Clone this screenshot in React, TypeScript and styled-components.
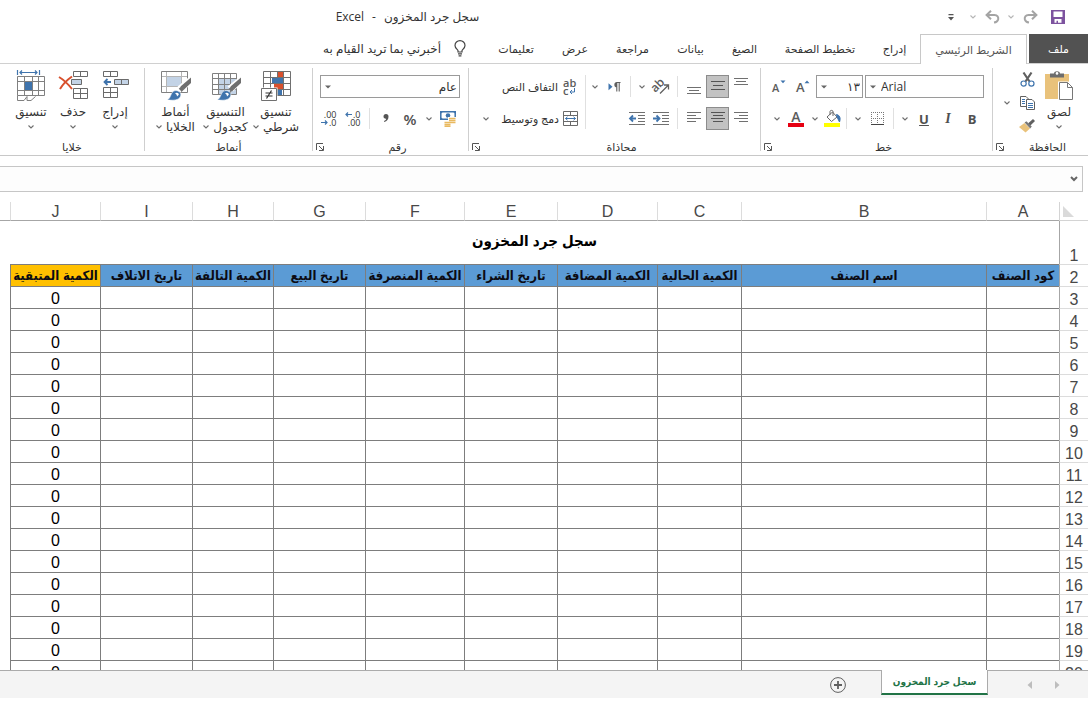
import React from "react";
import styled, { createGlobalStyle, css } from "styled-components";

const UI_FONT = `"Open Sans", "DejaVu Sans", sans-serif`;
const SHEET_FONT = `"Liberation Sans", "DejaVu Sans Condensed", "DejaVu Sans", Arial, sans-serif`;

const GlobalStyle = createGlobalStyle`
  *, *::before, *::after { box-sizing: border-box; }
  body { margin: 0; background: #fff; font-family: ${UI_FONT}; color: #333; }
  button, input, select { font: inherit; color: inherit; margin: 0; }
  button { background: none; border: 0; padding: 0; cursor: pointer; }
  svg { display: block; flex: none; overflow: visible; }
`;

const Page = styled.div`
  display: flex;
  flex-direction: column;
  height: 100vh;
  overflow: hidden;
  font-size: 11px;
`;

/* ---------- title bar ---------- */

const TitleBar = styled.header`
  display: flex;
  align-items: center;
  height: 34px;
  flex: none;
  padding-right: 14px;
`;

const QuickAccess = styled.div`
  display: flex;
  align-items: center;
`;

const DocTitle = styled.h1`
  flex: 1;
  display: flex;
  justify-content: center;
  gap: 8px;
  margin: 0;
  padding-right: 121px;
  font-size: 12px;
  font-weight: 400;
  line-height: 16px;
  white-space: nowrap;
`;

/* ---------- ribbon tabs ---------- */

const TabBar = styled.nav`
  display: flex;
  height: 30px;
  flex: none;
  border-bottom: 1px solid #d0d0d0;
`;

const Tab = styled.button<{ $w: number; $kind?: "file" | "active" }>`
  width: ${(p) => p.$w}px;
  height: 29px;
  white-space: nowrap;
  line-height: 16px;
  ${(p) =>
    p.$kind === "file" &&
    css`
      background: #525252;
      color: #fff;
      margin-left: 2px;
    `}
  ${(p) =>
    p.$kind === "active" &&
    css`
      height: 30px;
      background: #fff;
      border: 1px solid #c8c8c8;
      border-bottom: 0;
      color: #555;
    `}
`;

const TellMe = styled.button`
  display: flex;
  align-items: center;
  gap: 13px;
  margin-right: 18px;
  height: 29px;
  font-size: 12px;
  white-space: nowrap;
`;

/* ---------- ribbon ---------- */

const Ribbon = styled.div`
  display: flex;
  flex: none;
  height: 92px;
  padding: 4px 0;
  border-bottom: 1px solid #c8c8c8;
`;

const Group = styled.section<{ $w?: number }>`
  display: flex;
  flex-direction: column;
  ${(p) => (p.$w ? `width: ${p.$w}px; flex: none; border-left: 1px solid #cfcfcf;` : "flex: 1;")}
`;

const GroupBody = styled.div<{ $pad: number }>`
  display: flex;
  flex: 1;
  padding-right: ${(p) => p.$pad}px;
`;

const GroupFoot = styled.div`
  display: flex;
  align-items: center;
  height: 8px;
`;

const GroupName = styled.span`
  flex: 1;
  text-align: center;
  line-height: 16px;
`;

const Launcher = styled.button`
  display: flex;
  align-items: center;
  justify-content: center;
  width: 14px;
  height: 16px;
`;

const Stack = styled.div`
  display: flex;
  flex-direction: column;
  gap: 9px;
  padding-top: 7px;
`;

const Row = styled.div<{ $gap?: number }>`
  display: flex;
  align-items: center;
  height: 23px;
  gap: ${(p) => p.$gap ?? 0}px;
`;

const IconButton = styled.button<{ $w?: number; $on?: boolean }>`
  display: flex;
  align-items: center;
  justify-content: center;
  width: ${(p) => p.$w ?? 24}px;
  height: 23px;
  flex: none;
  ${(p) => p.$on && "background: #c2c2c2; border: 1px solid #8c8c8c;"}
`;

const Glyph = styled.span<{ $style?: string; $weight?: number; $size?: number }>`
  font-size: ${(p) => p.$size ?? 13}px;
  line-height: 16px;
  font-weight: ${(p) => p.$weight ?? 700};
  font-style: ${(p) => (p.$style === "italic" ? "italic" : "normal")};
  text-decoration: ${(p) => (p.$style === "underline" ? "underline" : "none")};
  color: #505050;
`;

const ItalicGlyph = styled(Glyph)`
  font-family: "Liberation Serif", serif;
`;

const Divider = styled.span<{ $tall?: boolean }>`
  width: 1px;
  height: ${(p) => (p.$tall ? 54 : 21)}px;
  margin: ${(p) => (p.$tall ? "7px 2px 0" : "0 4px")};
  background: #e0e0e0;
  flex: none;
`;

const TextButton = styled.button`
  display: flex;
  align-items: center;
  gap: 4px;
  height: 23px;
  padding-right: 5px;
  white-space: nowrap;
`;

const SelectBox = styled.span<{ $w: number }>`
  display: grid;
  width: ${(p) => p.$w}px;
  height: 23px;
  border: 1px solid #9a9a9a;
  align-items: center;
  > * { grid-area: 1 / 1; }
  > svg { justify-self: end; margin-left: 4px; pointer-events: none; }
`;

const Select = styled.select<{ $ltr?: boolean }>`
  appearance: none;
  width: 100%;
  height: 21px;
  border: 0;
  background: transparent;
  font-size: 12px;
  direction: ${(p) => (p.$ltr ? "ltr" : "rtl")};
  padding: ${(p) => (p.$ltr ? "0 2px 0 15px" : "0 2px 0 12px")};
`;

const BigButton = styled.button<{ $w: number }>`
  display: flex;
  flex-direction: column;
  align-items: center;
  width: ${(p) => p.$w}px;
  padding-top: 2px;
  font-size: 12px;
  line-height: 14px;
  white-space: nowrap;
  > svg:first-child { margin-bottom: 3px; }
`;

const BigLine = styled.span`
  display: flex;
  align-items: center;
  justify-content: center;
  gap: 4px;
  height: 15px;
`;

const ClipTools = styled.div`
  display: flex;
  flex-direction: column;
`;

const ClipDrop = styled.div`
  display: flex;
  align-items: center;
  height: 69px;
`;

/* ---------- formula bar ---------- */

const FormulaBar = styled.div`
  display: flex;
  flex: none;
  height: 26px;
  margin: 10px 5px 0 0;
  border: 1px solid #c6c6c6;
  border-left: 0;
  background: #fdfdfd;
`;

const FormulaInput = styled.input`
  flex: 1;
  min-width: 0;
  border: 0;
  background: transparent;
  outline: none;
`;

/* ---------- sheet ---------- */

const SheetArea = styled.main`
  flex: 1;
  min-height: 0;
  overflow: hidden;
  padding-top: 10px;
`;

const Sheet = styled.table`
  width: 100%;
  table-layout: fixed;
  border-collapse: separate;
  border-spacing: 0;
  font-family: ${SHEET_FONT};
  font-size: 16px;
  line-height: 18px;
`;

const Corner = styled.th`
  height: 19px;
  padding: 0 4px 3px 0;
  border-left: 1px solid #d4d4d4;
  border-bottom: 1px solid #d4d4d4;
  vertical-align: bottom;
  > svg { margin-right: auto; margin-left: 3px; }
`;

const ColHead = styled.th<{ $edge?: boolean }>`
  height: 19px;
  padding: 0;
  font-weight: 400;
  line-height: 16px;
  vertical-align: bottom;
  color: #484848;
  border-bottom: 1px solid #a6a6a6;
  border-left: ${(p) => (p.$edge ? "0" : "1px solid #dcdcdc")};
`;

const RowHead = styled.th`
  height: 22px;
  padding: 0;
  font-weight: 400;
  line-height: 16px;
  color: #484848;
  vertical-align: bottom;
  border-left: 1px solid #a6a6a6;
  border-bottom: 1px solid #dcdcdc;
`;

const TitleCell = styled.td`
  height: 44px;
  padding: 0 0 4px;
  text-align: center;
  font-weight: 700;
  font-size: 15px;
  color: #000;
  border-bottom: 1px solid #7d7d7d;
`;

const FieldHead = styled.th<{ $gold?: boolean }>`
  height: 22px;
  padding: 0;
  font-size: 13px;
  line-height: 20px;
  font-weight: 700;
  color: #0c0c14;
  white-space: nowrap;
  background: ${(p) => (p.$gold ? "#ffc000" : "#5b9bd5")};
  border-left: 1px solid #7d7d7d;
  border-bottom: 1px solid #7d7d7d;
`;

const Cell = styled.td`
  height: 22px;
  padding: 2px 0 0;
  text-align: center;
  color: #000;
  border-left: 1px solid #7d7d7d;
  border-bottom: 1px solid #7d7d7d;
`;

const Blank = styled.td`
  padding: 0;
`;

/* ---------- sheet tabs ---------- */

const SheetTabs = styled.footer`
  display: flex;
  flex: none;
  height: 28px;
  margin-bottom: 4px;
  background: #f4f4f4;
  border-top: 1px solid #ababab;
`;

const NavButtons = styled.div`
  display: flex;
  align-items: center;
  width: 100px;
  padding-right: 17px;
`;

const SheetTab = styled.button`
  width: 107px;
  height: 25px;
  margin-top: -1px;
  background: #fff;
  border: solid #ababab;
  border-width: 0 1px;
  border-bottom: 2px solid #217346;
  font-family: ${SHEET_FONT};
  font-size: 10px;
  font-weight: 700;
  color: #217346;
  white-space: nowrap;
`;

const AddSheet = styled.button`
  display: flex;
  align-items: center;
  margin-right: 35px;
`;

/* ---------- icons ---------- */

const G = "#6a6a6a";
const BLUE = "#3f74ad";

const Chevron = ({ light }: { light?: boolean }) => (
  <svg width="6" height="4" viewBox="0 0 6 4" fill="none" stroke={light ? "#b5b5b5" : "#6e6e6e"} strokeWidth="1.1">
    <path d="M0.5 0.5 3 3 5.5 0.5" />
  </svg>
);

const Caret = () => (
  <svg width="6" height="4" viewBox="0 0 6 4" fill="#666"><path d="M0 0.5H6L3 3.5Z" /></svg>
);

const SaveIcon = () => (
  <svg width="14" height="14" viewBox="0 0 14 14">
    <path d="M0 0H14V14H0Z" fill="#7d539f" />
    <path d="M2.5 1.5H11.5V7H2.5ZM3.5 9H10.5V12.8H7V10.8H5.5V12.8H3.5Z" fill="#fff" />
  </svg>
);

const UndoIcon = ({ flip }: { flip?: boolean }) => (
  <svg width="15" height="14" viewBox="0 0 15 14" fill="none" stroke="#a4a4a4" strokeWidth="2">
    <g transform={flip ? "translate(15 0) scale(-1 1)" : undefined}>
      <path d="M6 0.8 1.6 5 6 9.2M2 5H9.5C12.5 5 13.6 7 13.2 9.2 12.8 11 11 12.3 9 12.6" />
    </g>
  </svg>
);

const CustomizeIcon = () => (
  <svg width="6" height="7" viewBox="0 0 6 7" fill="#555"><path d="M0.5 0H5.5V1.2H0.5ZM0 3H6L3 6.5Z" /></svg>
);

const BulbIcon = () => (
  <svg width="12" height="17" viewBox="0 0 12 17" fill="none" stroke="#444" strokeWidth="1.2">
    <path d="M4 12V10.6C3.6 9.2 1 8.2 1 5.4A5 4.8 0 0 1 11 5.4C11 8.2 8.4 9.2 8 10.6V12ZM4 13.8H8M4.6 15.8H7.4" />
  </svg>
);

const PasteIcon = () => (
  <svg width="30" height="31" viewBox="0 0 30 31">
    <path d="M1 4H25V29H1Z" fill="#e9c27b" />
    <path d="M6 7.5V3.5H10C10 0.5 16 0.5 16 3.5H20V7.5Z" fill="#6d6d6d" />
    <circle cx="13" cy="3.4" r="1.3" fill="#fff" />
    <path d="M14 11.5H24.5L30 17V31H14Z" fill="#fff" />
    <path d="M15.5 12.5H23.5L28.5 17.5V29.5H15.5Z" fill="#fff" stroke="#777" />
    <path d="M23.5 12.5V17.5H28.5" fill="none" stroke="#777" />
  </svg>
);

const CutIcon = () => (
  <svg width="15" height="15" viewBox="0 0 15 15" fill="none">
    <path d="M3.5 0.5 9.5 9.5M11.5 0.5 5.5 9.5" stroke="#606060" strokeWidth="2.2" />
    <circle cx="3.6" cy="11.6" r="2.6" stroke={BLUE} strokeWidth="1.2" />
    <circle cx="11.4" cy="11.6" r="2.6" stroke={BLUE} strokeWidth="1.2" />
  </svg>
);

const CopyIcon = () => (
  <svg width="15" height="14" viewBox="0 0 15 14" fill="#fff" stroke="#606060">
    <path d="M0.5 0.5H6L8.5 3V10.5H0.5Z" />
    <path d="M2 3.5H5M2 5.5H5M2 7.5H5" stroke={BLUE} />
    <path d="M6.5 3.5H12L14.5 6V13.5H6.5Z" />
    <path d="M8 7.5H13M8 9.5H13M8 11.5H13" stroke={BLUE} />
  </svg>
);

const BrushIcon = () => (
  <svg width="16" height="14" viewBox="0 0 16 14">
    <path d="M0 8 5.5 4 11 9.5 6.5 13.5Z" fill="#e9c27b" />
    <path d="M5.6 3.6 7.4 2.2 12.8 7.6 11.2 9.4Z" fill="#777" />
    <path d="M9.2 4.2 14 0 16 2 11.4 6.4Z" fill="#606060" />
  </svg>
);

const LauncherIcon = () => (
  <svg width="8" height="8" viewBox="0 0 8 8" fill="none" stroke="#555">
    <path d="M0.5 7V0.5H7M3 3 7 7M7.5 3V7.5H3" />
  </svg>
);

const IconLetter = styled.text<{ $size: number }>`
  font-family: ${UI_FONT};
  font-size: ${(p) => p.$size}px;
  font-weight: 600;
  fill: #5c5c5c;
  direction: ltr;
`;

const GrowFont = ({ down }: { down?: boolean }) => (
  <svg width="14" height="16" viewBox="0 0 14 16">
    <IconLetter $size={down ? 11 : 13} x="0" y="13">A</IconLetter>
    <path d={down ? "M8.5 1.5H13.5L11 4.2Z" : "M8.5 4.2H13.5L11 1.5Z"} fill={BLUE} />
  </svg>
);

const BordersIcon = () => (
  <svg width="13" height="13" viewBox="0 0 13 13" fill="none" stroke="#777" strokeDasharray="1 1">
    <path d="M0 0.5H13M0 6.5H13M0.5 0V13M6.5 0V13M12.5 0V13" />
    <path d="M0 12.5H13" stroke="#444" strokeDasharray="none" />
  </svg>
);

const FillIcon = () => (
  <svg width="17" height="17" viewBox="0 0 17 17">
    <path d="M0 13H16V17H0Z" fill="#ffff00" />
    <path d="M3 7 8.5 2 13 7 7.5 11.5Z" fill="#fff" stroke="#666" />
    <path d="M6 5V1.5C6 0 9 0 9 1.5V6" fill="none" stroke="#666" />
    <path d="M12.5 4.5C15.5 5 17 8 15.5 12L13.5 8Z" fill={BLUE} stroke={BLUE} />
  </svg>
);

const FontColorIcon = () => (
  <svg width="16" height="16" viewBox="0 0 16 16">
    <IconLetter $size={14} x="8" y="11" textAnchor="middle">A</IconLetter>
    <path d="M0 12H16V16H0Z" fill="#e60012" />
  </svg>
);

const LINES: Record<string, [number, number, number][]> = {
  top: [[0, 14, 0], [2, 12, 3], [0, 14, 6]],
  mid: [[0, 14, 0], [2, 12, 4], [0, 14, 8]],
  bottom: [[0, 14, 0], [2, 12, 3], [0, 14, 6]],
  right: [[0, 14, 0], [5, 14, 3], [0, 14, 6], [5, 14, 9]],
  center: [[0, 14, 0], [2, 12, 3], [0, 14, 6], [2, 12, 9]],
  left: [[0, 14, 0], [0, 9, 3], [0, 14, 6], [0, 9, 9]],
};
const OFFSET: Record<string, number> = { top: 1, mid: 4, bottom: 10, right: 3, center: 3, left: 3 };

const LinesIcon = ({ kind }: { kind: string }) => (
  <svg width="14" height="19" viewBox="0 0 14 19" stroke={kind === "center" || kind === "mid" ? "#555" : "#707070"}>
    {LINES[kind].map(([a, b, y]) => (
      <path key={y} d={`M${a} ${y + OFFSET[kind] + 0.5}H${b}`} />
    ))}
  </svg>
);

const OrientIcon = () => (
  <svg width="18" height="17" viewBox="0 0 18 17" fill="none" stroke="#606060" strokeWidth="1.3">
    <g transform="rotate(-45 6 8)">
      <IconLetter $size={12} x="-1" y="11" stroke="none">ab</IconLetter>
    </g>
    <path d="M8 15.5 16 7.5M12 7H16.5V11.5" />
  </svg>
);

const DirectionIcon = () => (
  <svg width="13" height="10" viewBox="0 0 13 10">
    <path d="M0.5 1.2V8.2L4.5 4.7Z" fill={BLUE} />
    <path d="M9 0.5H12.5M8.8 0.5V9.5M11.2 0.5V9.5" fill="none" stroke="#606060" strokeWidth="1.1" />
    <path d="M9 0A2.6 2.6 0 0 0 9 5.3Z" fill="#606060" />
  </svg>
);

const IndentIcon = ({ left }: { left?: boolean }) => (
  <svg width="16" height="14" viewBox="0 0 16 14" fill="none" stroke="#707070">
    <path d="M0 0.5H16M9 3.5H16M9 6.5H16M9 9.5H16M0 12.5H16" />
    <path d={left ? "M1 6.5H7M4 3.5 1 6.5 4 9.5" : "M0 6.5H6M3.5 3.5 6.5 6.5 3.5 9.5"} stroke={BLUE} strokeWidth="1.8" />
  </svg>
);

const WrapIcon = () => (
  <svg width="16" height="18" viewBox="0 0 16 18">
    <IconLetter $size={11} x="1" y="9">ab</IconLetter>
    <IconLetter $size={11} x="1" y="17">c</IconLetter>
    <path d="M12.5 10V14H8M10 12 8 14 10 16" fill="none" stroke={BLUE} />
  </svg>
);

const MergeIcon = () => (
  <svg width="15" height="15" viewBox="0 0 15 15" fill="none" stroke={G}>
    <path d="M0.5 0.5H14.5V14.5H0.5ZM0.5 4.5H14.5M0.5 10.5H14.5M7.5 0.5V4.5M7.5 10.5V14.5" />
    <path d="M2.5 7.5H12.5M4.5 5.8 2.5 7.5 4.5 9.2M10.5 5.8 12.5 7.5 10.5 9.2" stroke={BLUE} />
  </svg>
);

const CurrencyIcon = () => (
  <svg width="16" height="16" viewBox="0 0 16 16">
    <path d="M0.8 0.8H15.2V8.2H0.8Z" fill="#fff" stroke={BLUE} strokeWidth="1.5" />
    <path d="M0 3.2V0H4ZM16 3.2V0H12ZM0 5.8V9H4Z" fill={BLUE} />
    <circle cx="8" cy="4.5" r="2.3" fill={BLUE} />
    <path d="M8 6H16V13H12V16H4V10H8Z" fill="#fff" />
    <path d="M9 7.5H15.5M9 9.5H15.5M9 11.5H15.5M4.5 11.5H10.5M4.5 13.5H10.5M4.5 15.3H10.5" stroke="#e9b95f" strokeWidth="1.4" />
  </svg>
);

const Decimals = styled.span`
  display: flex;
  flex-direction: column;
  align-items: stretch;
  width: 15px;
  direction: ltr;
  font-size: 9px;
  line-height: 8px;
  color: #333;
  > span { display: flex; justify-content: flex-end; align-items: center; gap: 1px; }
`;

const DecArrow = ({ left }: { left?: boolean }) => (
  <svg width="7" height="5" viewBox="0 0 7 5" fill="none" stroke={BLUE} strokeWidth="1.2">
    <path d={left ? "M7 2.5H1M3 0.5 1 2.5 3 4.5" : "M0 2.5H6M4 0.5 6 2.5 4 4.5"} />
  </svg>
);

const ConditionalIcon = () => (
  <svg width="30" height="31" viewBox="0 0 30 31">
    <g fill="#fff" stroke="#707070">
      <path d="M2.5 1.5H29.5V25.5H2.5ZM2.5 7.5H29.5M2.5 13.5H29.5M2.5 19.5H29.5M9.5 1.5V25.5M16.5 1.5V25.5M22.5 1.5V25.5" />
    </g>
    <path d="M17 2H22V7H17ZM13 14H22V19H13Z" fill="#d8502d" />
    <path d="M11 8H22V13H11ZM17 20H21V25H17Z" fill={BLUE} />
    <path d="M0 17.5H16.5V31H0Z" fill="#fff" />
    <path d="M0.5 18.5H15.5V30.5H0.5Z" fill="#fff" stroke="#707070" />
    <path d="M4.5 23H11.5M4.5 26H11.5M10.5 20.5 5.5 28.5" stroke="#333" strokeWidth="1.2" fill="none" />
  </svg>
);

const BrushOver = () => (
  <>
    <path d="M29.5 6 30 7V14L22 21.5 16.5 16.5Z" fill="#fff" />
    <path d="M30 7.5V13L23 19.5 19.5 16.5Z" fill="#6f6f6f" />
    <path d="M19 17.5 22 20.5" stroke="#707070" strokeWidth="3.5" />
    <path d="M6 29.8C10.5 28.5 9 22 14 20.6 18.5 20 21.5 24 19 27.4 16 31 10 30.4 6 29.8Z" fill={BLUE} stroke="#fff" strokeWidth="0.6" />
    <path d="M14 23.5C15.5 22 18 22.8 17.8 24.8L16 26.5C16 25 15.5 24 14 23.5Z" fill="#fff" />
  </>
);

const TableStyleIcon = () => (
  <svg width="30" height="31" viewBox="0 0 30 31">
    <path d="M1.5 3.5H25.5V24.5H1.5Z" fill="#fff" />
    <path d="M8 9H25V24H8Z" fill="#c3d3e6" />
    <path d="M1.5 3.5H25.5V24.5H1.5ZM1.5 8.5H25.5M1.5 14.5H25.5M1.5 19.5H25.5M7.5 3.5V24.5M13.5 3.5V24.5M19.5 3.5V24.5" fill="none" stroke="#808080" />
    <BrushOver />
  </svg>
);

const CellStyleIcon = () => (
  <svg width="30" height="31" viewBox="0 0 30 31">
    <path d="M0.5 1.5H26.5V22.5H0.5Z" fill="#fff" stroke="#808080" />
    <path d="M1 6.5H26M1 16.5H26M5.5 2V22M20.5 2V22" fill="none" stroke="#b5b5b5" />
    <path d="M6 7H20V16H6Z" fill="#c3d3e6" />
    <BrushOver />
  </svg>
);

const InsertCells = () => (
  <svg width="27" height="31" viewBox="0 0 27 31" fill="#fff" stroke={G}>
    <path d="M1.5 1.5H15.5V6.5H1.5ZM8.5 1.5V6.5M1.5 17.5H15.5V27.5H1.5ZM1.5 22.5H15.5M8.5 17.5V27.5" />
    <path d="M12.5 9.5H26.5V14.5H12.5ZM19.5 9.5V14.5" fill="#c3d3e6" />
    <path d="M9 12H2.5M5.5 9 2.5 12 5.5 15" fill="none" stroke={BLUE} strokeWidth="1.8" />
  </svg>
);

const DeleteCells = () => (
  <svg width="30" height="31" viewBox="0 0 30 31" fill="#fff" stroke={G}>
    <path d="M15.5 1.5H29.5V6.5H15.5ZM22.5 1.5V6.5M15.5 18.5H29.5V28.5H15.5ZM15.5 23.5H29.5M22.5 18.5V28.5" />
    <path d="M13.5 9.5H23.5V14.5H13.5Z" fill="#c3d3e6" />
    <path d="M1 7C6 10 10 14 14 19M14 6.5C9 10 5 14 2 19" fill="none" stroke="#d8502d" strokeWidth="2" />
  </svg>
);

const FormatCells = () => (
  <svg width="28" height="31" viewBox="0 0 28 31" fill="none" stroke="#808080">
    <path d="M0.5 6.5H27.5V25.5H0.5ZM0.5 11.5H27.5M0.5 20.5H27.5M7.5 6.5V25.5M15.5 6.5V25.5M21.5 6.5V25.5" fill="#fff" />
    <path d="M8 12H15V20H8Z" fill={BLUE} stroke="none" />
    <path d="M0.5 25.5V30.5H7L10 26.5M10 26.5V30.5H14L18.5 26.5" />
    <path d="M0.5 0V5M22.5 0V5M3 2.5H20M5 0.5 3 2.5 5 4.5M18 0.5 20 2.5 18 4.5" stroke={BLUE} strokeWidth="1.2" />
  </svg>
);

const CornerIcon = () => (
  <svg width="11" height="11" viewBox="0 0 11 11"><path d="M0 0V11H11Z" fill="#dadada" /></svg>
);

const Arrow = ({ left }: { left?: boolean }) => (
  <svg width="5" height="8" viewBox="0 0 5 8" fill="#bdbdbd"><path d={left ? "M5 0V8L0.5 4Z" : "M0 0V8L4.5 4Z"} /></svg>
);

const PlusCircle = () => (
  <svg width="16" height="16" viewBox="0 0 16 16" fill="none" stroke="#606060">
    <circle cx="8" cy="8" r="7.4" />
    <path d="M8 4V12M4 8H12" strokeWidth="1.8" />
  </svg>
);

/* ---------- data ---------- */

const TABS: [string, number][] = [
  ["إدراج", 51],
  ["تخطيط الصفحة", 98],
  ["الصيغ", 53],
  ["بيانات", 55],
  ["مراجعة", 61],
  ["عرض", 54],
  ["تعليمات", 64],
];

const COLUMNS: { id: string; name: string; width?: number }[] = [
  { id: "A", name: "كود الصنف", width: 73 },
  { id: "B", name: "اسم الصنف" },
  { id: "C", name: "الكمية الحالية", width: 84 },
  { id: "D", name: "الكمية المضافة", width: 100 },
  { id: "E", name: "تاريخ الشراء", width: 93 },
  { id: "F", name: "الكمية المنصرفة", width: 99 },
  { id: "G", name: "تاريخ البيع", width: 92 },
  { id: "H", name: "الكمية التالفة", width: 81 },
  { id: "I", name: "تاريخ الاتلاف", width: 92 },
  { id: "J", name: "الكمية المتبقية", width: 90 },
];

const ROWS = Array.from({ length: 18 }, (_, i) => i + 3);

const Drop = ({ label, light, w = 14 }: { label: string; light?: boolean; w?: number }) => (
  <IconButton $w={w} aria-label={label}>
    <Chevron light={light} />
  </IconButton>
);

const Foot = ({ name, launcher = true }: { name: string; launcher?: boolean }) => (
  <GroupFoot>
    <GroupName>{name}</GroupName>
    {launcher && (
      <Launcher aria-label={name}>
        <LauncherIcon />
      </Launcher>
    )}
  </GroupFoot>
);

export default function App() {
  return (
    <Page dir="rtl" lang="ar">
      <GlobalStyle />
      <TitleBar>
        <QuickAccess>
          <IconButton $w={32} aria-label="حفظ"><SaveIcon /></IconButton>
          <IconButton aria-label="إعادة"><UndoIcon flip /></IconButton>
          <Drop label="خيارات الإعادة" light />
          <IconButton aria-label="تراجع"><UndoIcon /></IconButton>
          <Drop label="خيارات التراجع" light />
          <IconButton $w={30} aria-label="تخصيص"><CustomizeIcon /></IconButton>
        </QuickAccess>
        <DocTitle>
          <span>سجل جرد المخزون</span>
          <span>-</span>
          <span>Excel</span>
        </DocTitle>
      </TitleBar>

      <TabBar>
        <Tab $w={59} $kind="file">ملف</Tab>
        <Tab $w={107} $kind="active">الشريط الرئيسي</Tab>
        {TABS.map(([name, w]) => (
          <Tab key={name} $w={w}>{name}</Tab>
        ))}
        <TellMe>
          <BulbIcon />
          أخبرني بما تريد القيام به
        </TellMe>
      </TabBar>

      <Ribbon>
        <Group $w={96}>
          <GroupBody $pad={12}>
            <BigButton $w={34}>
              <PasteIcon />
              <BigLine>لصق</BigLine>
              <BigLine><Chevron /></BigLine>
            </BigButton>
            <ClipTools>
              <IconButton $w={30} aria-label="قص"><CutIcon /></IconButton>
              <IconButton $w={30} aria-label="نسخ"><CopyIcon /></IconButton>
              <IconButton $w={30} aria-label="نسخ التنسيق"><BrushIcon /></IconButton>
            </ClipTools>
            <ClipDrop>
              <Drop label="خيارات النسخ" w={10} />
            </ClipDrop>
          </GroupBody>
          <Foot name="الحافظة" />
        </Group>

        <Group $w={232}>
          <GroupBody $pad={8}>
            <Stack>
              <Row $gap={2}>
                <SelectBox $w={119}>
                  <Select $ltr aria-label="الخط" defaultValue="Arial"><option>Arial</option></Select>
                  <Caret />
                </SelectBox>
                <SelectBox $w={47}>
                  <Select aria-label="حجم الخط" defaultValue="١٣"><option>١٣</option></Select>
                  <Caret />
                </SelectBox>
                <IconButton $w={22} aria-label="تكبير الخط"><GrowFont /></IconButton>
                <IconButton $w={22} aria-label="تصغير الخط"><GrowFont down /></IconButton>
              </Row>
              <Row>
                <IconButton aria-label="غامق"><Glyph>B</Glyph></IconButton>
                <IconButton aria-label="مائل"><ItalicGlyph $style="italic" $size={14}>I</ItalicGlyph></IconButton>
                <IconButton aria-label="تسطير"><Glyph $style="underline">U</Glyph></IconButton>
                <Drop label="خيارات التسطير" />
                <Divider />
                <IconButton aria-label="حدود"><BordersIcon /></IconButton>
                <Drop label="خيارات الحدود" />
                <Divider />
                <IconButton $w={20} aria-label="لون التعبئة"><FillIcon /></IconButton>
                <Drop label="خيارات التعبئة" />
                <IconButton aria-label="لون الخط"><FontColorIcon /></IconButton>
                <Drop label="خيارات لون الخط" />
              </Row>
            </Stack>
          </GroupBody>
          <Foot name="خط" />
        </Group>

        <Group $w={292}>
          <GroupBody $pad={7}>
            <Stack>
              <Row>
                <IconButton aria-label="محاذاة للأعلى"><LinesIcon kind="top" /></IconButton>
                <IconButton $w={23} $on aria-label="محاذاة للوسط"><LinesIcon kind="mid" /></IconButton>
                <IconButton aria-label="محاذاة للأسفل"><LinesIcon kind="bottom" /></IconButton>
                <Divider />
                <IconButton aria-label="اتجاه النص"><OrientIcon /></IconButton>
                <Drop label="خيارات الاتجاه" />
                <Divider />
                <IconButton aria-label="اتجاه الفقرة"><DirectionIcon /></IconButton>
                <Drop label="خيارات الفقرة" />
              </Row>
              <Row>
                <IconButton aria-label="محاذاة لليمين"><LinesIcon kind="right" /></IconButton>
                <IconButton $w={23} $on aria-label="توسيط"><LinesIcon kind="center" /></IconButton>
                <IconButton aria-label="محاذاة لليسار"><LinesIcon kind="left" /></IconButton>
                <Divider />
                <IconButton aria-label="إنقاص المسافة"><IndentIcon /></IconButton>
                <IconButton aria-label="زيادة المسافة"><IndentIcon left /></IconButton>
              </Row>
            </Stack>
            <Divider $tall />
            <Stack>
              <TextButton><WrapIcon />التفاف النص</TextButton>
              <Row>
                <TextButton><MergeIcon />دمج وتوسيط</TextButton>
                <Drop label="خيارات الدمج" w={30} />
              </Row>
            </Stack>
          </GroupBody>
          <Foot name="محاذاة" />
        </Group>

        <Group $w={156}>
          <GroupBody $pad={8}>
            <Stack>
              <SelectBox $w={140}>
                <Select aria-label="تنسيق الأرقام" defaultValue="عام"><option>عام</option></Select>
                <Caret />
              </SelectBox>
              <Row>
                <IconButton aria-label="تنسيق العملة"><CurrencyIcon /></IconButton>
                <Drop label="خيارات العملة" />
                <IconButton aria-label="نسبة مئوية"><Glyph $weight={600} $size={15}>%</Glyph></IconButton>
                <IconButton aria-label="نمط الفاصلة">
                  <svg width="6" height="9" viewBox="0 0 6 9" fill="#555">
                    <path d="M0.5 2.6A2.4 2.4 0 0 1 5.5 2.6C5.6 5.4 4 7.4 1.2 8L1 7C2.6 6.4 3.2 5.6 3.2 4.8 1.6 5 0.5 4 0.5 2.6Z" />
                  </svg>
                </IconButton>
                <Divider />
                <IconButton aria-label="زيادة المنازل العشرية">
                  <Decimals>
                    <span><DecArrow left />.0</span>
                    <span>.00</span>
                  </Decimals>
                </IconButton>
                <IconButton aria-label="إنقاص المنازل العشرية">
                  <Decimals>
                    <span>.00</span>
                    <span><DecArrow />.0</span>
                  </Decimals>
                </IconButton>
              </Row>
            </Stack>
          </GroupBody>
          <Foot name="رقم" />
        </Group>

        <Group $w={168}>
          <GroupBody $pad={11}>
            <BigButton $w={50}>
              <ConditionalIcon />
              <BigLine>تنسيق</BigLine>
              <BigLine>شرطي<Chevron /></BigLine>
            </BigButton>
            <BigButton $w={51}>
              <TableStyleIcon />
              <BigLine>التنسيق</BigLine>
              <BigLine>كجدول<Chevron /></BigLine>
            </BigButton>
            <BigButton $w={49}>
              <CellStyleIcon />
              <BigLine>أنماط</BigLine>
              <BigLine>الخلايا<Chevron /></BigLine>
            </BigButton>
          </GroupBody>
          <Foot name="أنماط" launcher={false} />
        </Group>

        <Group>
          <GroupBody $pad={8}>
            <BigButton $w={42}>
              <InsertCells />
              <BigLine>إدراج</BigLine>
              <BigLine><Chevron /></BigLine>
            </BigButton>
            <BigButton $w={42}>
              <DeleteCells />
              <BigLine>حذف</BigLine>
              <BigLine><Chevron /></BigLine>
            </BigButton>
            <BigButton $w={42}>
              <FormatCells />
              <BigLine>تنسيق</BigLine>
              <BigLine><Chevron /></BigLine>
            </BigButton>
          </GroupBody>
          <Foot name="خلايا" launcher={false} />
        </Group>
      </Ribbon>

      <FormulaBar>
        <IconButton $w={16} aria-label="توسيع شريط الصيغة">
          <svg width="8" height="6" viewBox="0 0 8 6" fill="none" stroke="#666" strokeWidth="2"><path d="M1 1 4 4 7 1" /></svg>
        </IconButton>
        <FormulaInput aria-label="شريط الصيغة" />
      </FormulaBar>

      <SheetArea>
        <Sheet>
          <colgroup>
            <col width={29} />
            {COLUMNS.map((c) => (
              <col key={c.id} width={c.width} />
            ))}
            <col width={10} />
          </colgroup>
          <thead>
            <tr>
              <Corner aria-label="تحديد الكل"><CornerIcon /></Corner>
              {COLUMNS.map((c) => (
                <ColHead key={c.id} scope="col">{c.id}</ColHead>
              ))}
              <ColHead as="td" $edge />
            </tr>
          </thead>
          <tbody>
            <tr>
              <RowHead scope="row">1</RowHead>
              <TitleCell colSpan={10}>سجل جرد المخزون</TitleCell>
              <Blank />
            </tr>
            <tr>
              <RowHead scope="row">2</RowHead>
              {COLUMNS.map((c) => (
                <FieldHead key={c.id} $gold={c.id === "J"}>{c.name}</FieldHead>
              ))}
              <Blank />
            </tr>
            {ROWS.map((n) => (
              <tr key={n}>
                <RowHead scope="row">{n}</RowHead>
                {COLUMNS.map((c) => (
                  <Cell key={c.id}>{c.id === "J" ? "0" : ""}</Cell>
                ))}
                <Blank />
              </tr>
            ))}
          </tbody>
        </Sheet>
      </SheetArea>

      <SheetTabs>
        <NavButtons>
          <IconButton $w={28} aria-label="الورقة السابقة"><Arrow /></IconButton>
          <IconButton $w={28} aria-label="الورقة التالية"><Arrow left /></IconButton>
        </NavButtons>
        <SheetTab>سجل جرد المخزون</SheetTab>
        <AddSheet aria-label="ورقة جديدة"><PlusCircle /></AddSheet>
      </SheetTabs>
    </Page>
  );
}
